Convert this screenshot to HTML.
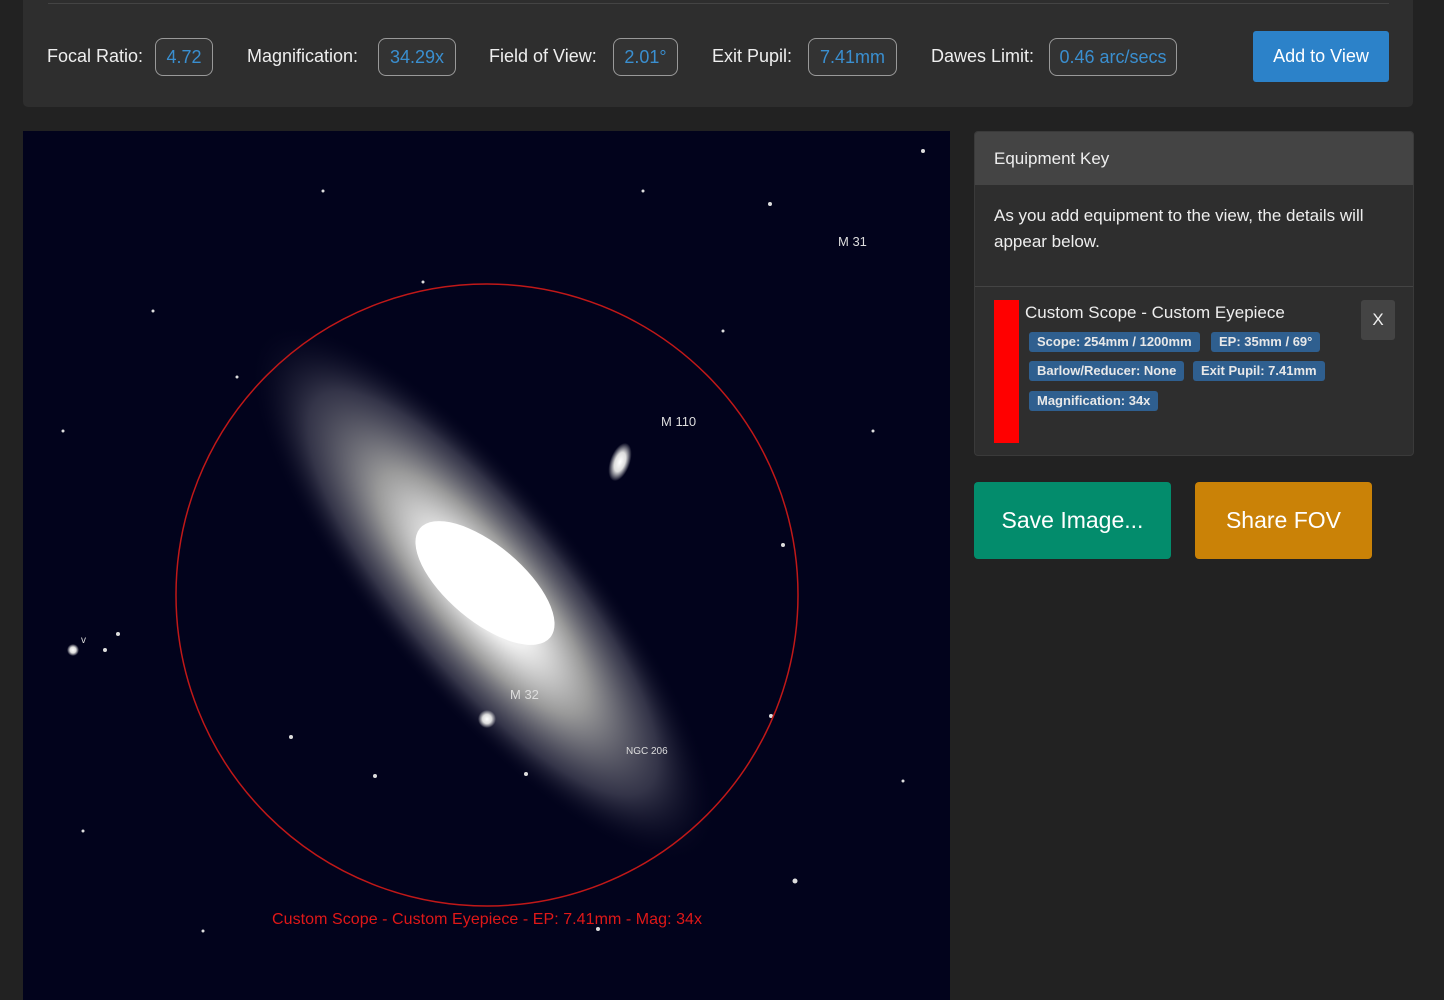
<!DOCTYPE html>
<html><head><meta charset="utf-8"><style>
*{box-sizing:border-box;margin:0;padding:0}
body{width:1444px;height:1000px;background:#222;font-family:"Liberation Sans",sans-serif;color:#eee;position:relative;overflow:hidden}
.top{position:absolute;left:23px;top:-6px;width:1390px;height:113px;background:#2e2e2e;border-radius:5px}
.line{position:absolute;left:48px;top:3px;width:1341px;height:1px;background:#444}
.lbl{position:absolute;top:46px;font-size:18px;color:#eee}
.val{position:absolute;top:38px;height:38px;border:1px solid #999;border-radius:8px;color:#3a8fd0;font-size:18px;line-height:36px;text-align:center;background:#333}
.add{position:absolute;left:1253px;top:31px;width:136px;height:51px;background:#2c82c9;border-radius:3px;color:#fff;font-size:18px;line-height:51px;text-align:center}
.img{position:absolute;left:23px;top:131px;width:927px;height:869px;background:#02031c;overflow:hidden}
.card{position:absolute;left:974px;top:131px;width:440px;height:325px;background:#2e2e2e;border:1px solid #3a3a3a;border-radius:4px;overflow:hidden}
.ch{height:53px;background:#444;padding:17px 19px;font-size:17px;color:#eee}
.cb{padding:18px 19px;font-size:17px;line-height:26px;height:102px;border-bottom:1px solid #444}
.red{position:absolute;left:19px;top:168px;width:25px;height:143px;background:#f00}
.tt{position:absolute;left:50px;top:171px;font-size:17px}
.tag{position:absolute;height:20px;background:#2f5f8f;border-radius:3px;color:#e8e8e8;font-size:13px;font-weight:bold;line-height:20px;padding:0 8px}
.x{position:absolute;left:386px;top:168px;width:34px;height:40px;background:#444;border-radius:3px;text-align:center;line-height:40px;font-size:17px}
.btn{position:absolute;top:482px;height:77px;border-radius:4px;color:#fff;font-size:23px;line-height:77px;text-align:center}
</style></head><body>
<div class="top"></div><div class="line"></div>
<div class="lbl" style="left:47px">Focal Ratio:</div><div class="val" style="left:155px;width:58px">4.72</div>
<div class="lbl" style="left:247px">Magnification:</div><div class="val" style="left:378px;width:78px">34.29x</div>
<div class="lbl" style="left:489px">Field of View:</div><div class="val" style="left:613px;width:65px">2.01°</div>
<div class="lbl" style="left:712px">Exit Pupil:</div><div class="val" style="left:808px;width:89px">7.41mm</div>
<div class="lbl" style="left:931px">Dawes Limit:</div><div class="val" style="left:1049px;width:128px">0.46 arc/secs</div>
<div class="add">Add to View</div>
<div class="img"><svg width="927" height="869">
<defs><radialGradient id="g"><stop offset="0" stop-color="#fff"/><stop offset="0.2" stop-color="#eee"/><stop offset="0.45" stop-color="#999"/><stop offset="0.75" stop-color="#556" stop-opacity="0.6"/><stop offset="1" stop-color="#02031c" stop-opacity="0"/></radialGradient>
<radialGradient id="s"><stop offset="0" stop-color="#fff"/><stop offset="0.5" stop-color="#ddd"/><stop offset="1" stop-color="#ddd" stop-opacity="0"/></radialGradient></defs>
<ellipse cx="460" cy="462" rx="340" ry="105" fill="url(#g)" transform="rotate(50 460 462)"/>
<ellipse cx="462" cy="452" rx="85" ry="38" fill="#fff" transform="rotate(40 462 452)"/>
<ellipse cx="597" cy="331" rx="10" ry="20" fill="url(#s)" transform="rotate(20 597 331)"/>
<circle cx="464" cy="588" r="9" fill="url(#s)"/>
<circle cx="50" cy="519" r="6" fill="url(#s)"/>
<g fill="#ddd"><circle cx="82" cy="519" r="2"/><circle cx="95" cy="503" r="2"/><circle cx="747" cy="73" r="2"/><circle cx="400" cy="151" r="1.5"/><circle cx="760" cy="414" r="2"/><circle cx="268" cy="606" r="2"/><circle cx="352" cy="645" r="2"/><circle cx="503" cy="643" r="2"/><circle cx="772" cy="750" r="2.5"/><circle cx="575" cy="798" r="2"/><circle cx="748" cy="585" r="2"/><circle cx="214" cy="246" r="1.5"/><circle cx="130" cy="180" r="1.5"/><circle cx="900" cy="20" r="2"/><circle cx="620" cy="60" r="1.5"/><circle cx="850" cy="300" r="1.5"/><circle cx="180" cy="800" r="1.5"/><circle cx="60" cy="700" r="1.5"/><circle cx="880" cy="650" r="1.5"/><circle cx="300" cy="60" r="1.5"/><circle cx="40" cy="300" r="1.5"/><circle cx="700" cy="200" r="1.5"/></g>
<circle cx="464" cy="464" r="311" fill="none" stroke="#c01818" stroke-width="1.5"/>
<g fill="#ddd" font-size="13" font-family="Liberation Sans,sans-serif"><text x="815" y="115">M 31</text><text x="638" y="295">M 110</text><text x="487" y="568">M 32</text><text x="603" y="623" font-size="10">NGC 206</text><text x="58" y="512" font-size="10">v</text></g>
<text x="249" y="793" fill="#e01818" font-size="16" textLength="430" font-family="Liberation Sans,sans-serif">Custom Scope - Custom Eyepiece - EP: 7.41mm - Mag: 34x</text>
</svg></div>
<div class="card"><div class="ch">Equipment Key</div><div class="cb">As you add equipment to the view, the details will appear below.</div>
<div class="red"></div><div class="tt">Custom Scope - Custom Eyepiece</div>
<div class="tag" style="left:54px;top:200px">Scope: 254mm / 1200mm</div>
<div class="tag" style="left:236px;top:200px">EP: 35mm / 69°</div>
<div class="tag" style="left:54px;top:229px">Barlow/Reducer: None</div>
<div class="tag" style="left:218px;top:229px">Exit Pupil: 7.41mm</div>
<div class="tag" style="left:54px;top:259px">Magnification: 34x</div>
<div class="x">X</div></div>
<div class="btn" style="left:974px;width:197px;background:#038c6c">Save Image...</div>
<div class="btn" style="left:1195px;width:177px;background:#ca8207">Share FOV</div>
</body></html>
